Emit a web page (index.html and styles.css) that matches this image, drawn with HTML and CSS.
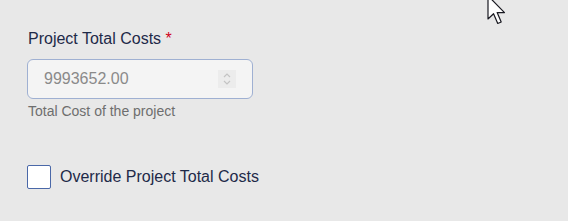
FILE: index.html
```html
<!DOCTYPE html>
<html lang="en">
<head>
  <meta charset="UTF-8">
  <title>Project Total Costs</title>
  <link rel="stylesheet" href="styles.css">
</head>
<body>
  <div class="campo">
    <label class="etiqueta" for="total">Project Total Costs <span class="req">*</span></label>
    <div class="caja">
      <input id="total" class="valor" value="9993652.00" disabled>
      <span class="spinner">
        <svg width="10" height="14" viewBox="0 0 10 14">
          <path d="M2 5 L5 2 L8 5 M2 9 L5 12 L8 9" fill="none" stroke="#c4c4c4" stroke-width="1.2"/>
        </svg>
      </span>
    </div>
    <div class="ayuda">Total Cost of the project</div>
  </div>

  <label class="check">
    <span class="cuadro"></span>
    <span>Override Project Total Costs</span>
  </label>

  <svg class="cursor" width="20" height="30" viewBox="0 0 13 20">
    <path d="M0.5 0.5 L0.5 16 L4.2 12.5 L7 19 L9.3 18 L6.6 11.7 L11.5 11.7 Z" fill="#fff" stroke="#1a1a22" stroke-width="0.8" stroke-linejoin="round"/>
  </svg>
</body>
</html>
```

FILE: styles.css
```css
body {
  font-family: 'Liberation Sans', Arial, sans-serif;
  margin: 0;
  padding: 29px 0 0 27px;
  background-color: #e8e8e8;
  color: #1e2a48;
  height: 221px;
  box-sizing: border-box;
  overflow: hidden;
  position: relative;
}

.campo {
  display: flex;
  flex-direction: column;
  width: 226px;
}

.etiqueta {
  font-size: 16px;
  line-height: 20px;
  padding-left: 1px;
}

.req {
  color: #d0021b;
}

.caja {
  margin-top: 10px;
  height: 40px;
  box-sizing: border-box;
  border: 1px solid #9fb0d2;
  border-radius: 6px;
  background: #f4f4f4;
  display: flex;
  align-items: center;
  padding: 0 16px 0 16px;
}

.valor {
  flex: 1;
  min-width: 0;
  border: none;
  background: transparent;
  font-family: inherit;
  font-size: 16px;
  color: #8a8a8a;
  padding: 0;
  outline: none;
}

.spinner {
  width: 18px;
  height: 18px;
  background: #ececec;
  display: flex;
  align-items: center;
  justify-content: center;
}

.ayuda {
  margin-top: 4px;
  font-size: 14px;
  line-height: 16px;
  color: #6e6e6e;
  padding-left: 1px;
}

.check {
  margin-top: 46px;
  display: flex;
  align-items: center;
  gap: 9px;
  font-size: 16px;
}

.cuadro {
  width: 24px;
  height: 24px;
  box-sizing: border-box;
  border: 1px solid #4a68a8;
  border-radius: 2px;
  background: #fff;
}

.cursor {
  position: absolute;
  left: 487px;
  top: -5px;
}
```
